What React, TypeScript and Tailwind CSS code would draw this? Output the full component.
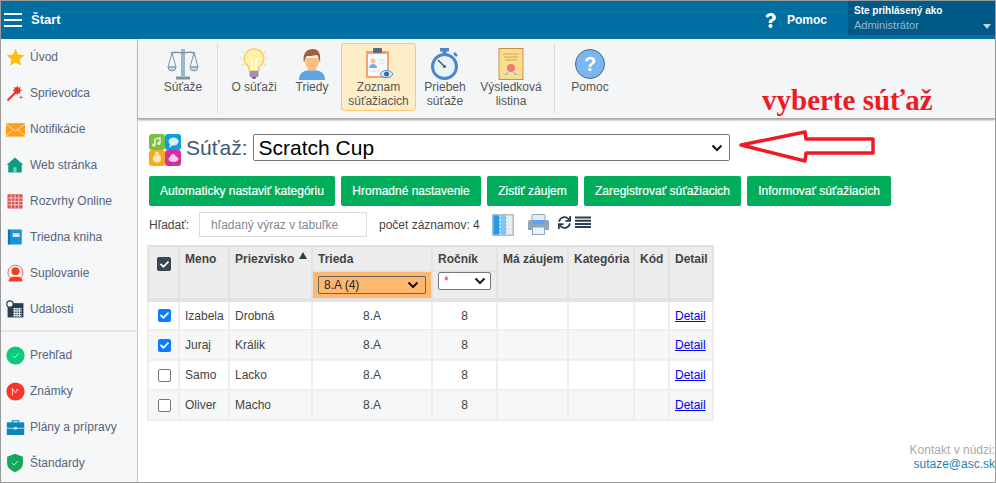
import React from "react";
import { FaCheck, FaQuestion, FaSync } from "react-icons/fa";

const I = ({ children, vb = "0 0 24 24", size = 18 }: { children: React.ReactNode; vb?: string; size?: number }) => (
  <svg viewBox={vb} width={size} height={size} className="shrink-0">{children}</svg>
);

const navTop: [string, React.ReactNode][] = [
  ["Úvod", <I size={19}><path d="M12 1l3.300 7.200 7.700.9-5.700 5.300 1.600 7.700L12 18.200 5.100 22.100l1.600-7.700L1 9.100l7.700-.9z" fill="#fdc00f" /></I>],
  ["Sprievodca", <I><path d="M1 21L13 9l2 2L3 23z" fill="#e8342c" /><path d="M15 2l1.500 3 3-1-1 3 3 1.500-3 1.500 1 3-3-1-1.500 3-1.500-3-3 1 1-3-3-1.500 3-1.500-1-3 3 1z" fill="#e8342c" /><path d="M20 15l.7 2 2 .7-2 .7-.7 2-.7-2-2-.7 2-.7z" fill="#e8342c" /></I>],
  ["Notifikácie", <I size={19}><rect x="0" y="4" width="24" height="17" fill="#fb9f1e" /><path d="M0 5l12 9 12-9M0 20l9-8M24 20l-9-8" fill="none" stroke="#fff1d8" strokeWidth="1" /></I>],
  ["Web stránka", <I><path d="M12 2L1 11.500 3 12v10h18V12l2-.5z" fill="#0a9d83" /><rect x="10" y="15" width="4" height="7" fill="#7fd0c0" /></I>],
  ["Rozvrhy Online", <I><rect x="2" y="3" width="20" height="19" fill="#d9534f" /><path d="M2 8h20M2 12.500h20M2 17h20M7 3v19M12 3v19M17 3v19" stroke="#f6d5d3" strokeWidth="1.200" /></I>],
  ["Triedna kniha", <I><rect x="4" y="2" width="17" height="20" rx="1" fill="#1b93d8" /><rect x="2.500" y="2" width="3" height="20" fill="#1071ad" /><rect x="9" y="7" width="9" height="5" fill="#d8eefb" /></I>],
  ["Suplovanie", <I size={19}><circle cx="12" cy="11" r="9.500" fill="none" stroke="#f0634e" strokeWidth="1.200" /><circle cx="12" cy="9" r="5" fill="#f73d1e" /><path d="M3 22c1-6 5-6 9-6s8 0 9 6z" fill="#f73d1e" /></I>],
  ["Udalosti", <I size={19}><rect x="2" y="4" width="20" height="18" fill="#2b3e50" /><path d="M9 11h11M9 14h11M9 17h11M9 20h11M11 10v11M14 10v11M17 10v11" stroke="#e9edf0" strokeWidth="1.300" /><circle cx="5" cy="5" r="4" fill="#f4f6f8" stroke="#2b3e50" strokeWidth="1.500" /></I>],
];
const navBottom: [string, React.ReactNode][] = [
  ["Prehľad", <I size={19}><circle cx="12" cy="12" r="11.500" fill="#0fc97a" /><path d="M8 12l3 3 5-6" fill="none" stroke="#d9fbe9" strokeWidth="1" /></I>],
  ["Známky", <I size={19}><circle cx="12" cy="12" r="11.500" fill="#f8352a" /><path d="M8 17V8l4 6 2-5 2 2" fill="none" stroke="#ffd8d4" strokeWidth="1.200" /></I>],
  ["Plány a prípravy", <I size={19}><path d="M8 6V3.500h8V6" fill="none" stroke="#0b86bd" strokeWidth="1.500" /><rect x="1" y="5.500" width="22" height="16" fill="#0b86bd" /><path d="M1 13h22" stroke="#d8eefb" strokeWidth="1" /><rect x="10" y="11.500" width="4" height="3" fill="#d8eefb" /></I>],
  ["Štandardy", <I size={20}><path d="M12 1l9.500 3.500V12c0 6-4.500 9-9.500 11-5-2-9.500-5-9.500-11V4.500z" fill="#12a95a" /><path d="M8.500 12l2.500 2.500 4.500-5" fill="none" stroke="#d9fbe9" strokeWidth="1" /></I>],
];

const NavItem = ({ label, icon }: { label: string; icon: React.ReactNode }) => (
  <div className="flex h-9 items-center">
    <div className="flex w-[29px] justify-center pl-[2px] pr-[3px]">{icon}</div>
    <span>{label}</span>
  </div>
);

const Tool = ({ label, icon, active, w }: { label: React.ReactNode; icon: React.ReactNode; active?: boolean; w: string }) => (
  <div className={`flex h-[68px] shrink-0 flex-col items-center rounded-[3px] border pt-[3px] text-center leading-[14px] text-[#555] ${w} ${active ? "border-[#fcc96b] bg-[#fdeec9]" : "border-transparent"}`}>
    <div className="flex h-[33px] items-center justify-center">{icon}</div>
    <div className="whitespace-nowrap">{label}</div>
  </div>
);

const btns: [string, string][] = [
  ["Automaticky nastaviť kategóriu", "w-[186px]"],
  ["Hromadné nastavenie", "w-[140px]"],
  ["Zistiť záujem", "w-[91px]"],
  ["Zaregistrovať súťažiacich", "w-[157px]"],
  ["Informovať súťažiacich", "w-[144px]"],
];

const rows = [
  ["Izabela", "Drobná", true],
  ["Juraj", "Králik", true],
  ["Samo", "Lacko", false],
  ["Oliver", "Macho", false],
] as const;

const Chevron = () => (
  <svg width="12" height="8" viewBox="0 0 12 8" className="shrink-0"><path d="M1.500 1.500L6 6l4.500-4.500" fill="none" stroke="#111" strokeWidth="2" /></svg>
);

const th = "border-2 border-[#e3e3e3] bg-[#ececec] align-top text-left font-bold text-[#444] whitespace-nowrap";
const td = "border-2 border-[#eeeeee] px-[5px] text-[#444]";

export default function App() {
  return (
    <div className="relative flex h-[483px] w-[996px] flex-col overflow-hidden border border-[#9a9a9a] bg-white text-[12px] [font-family:Liberation_Sans,Arial,sans-serif]">
      <header className="flex h-[38px] shrink-0 items-center bg-[#0070a3] text-white">
        <div className="ml-[3px] flex w-[18px] flex-col gap-[4px]">
          <div className="h-[2px] bg-white" /><div className="h-[2px] bg-white" /><div className="h-[2px] bg-white" />
        </div>
        <span className="ml-[9px] text-[13px] font-bold">Štart</span>
        <div className="ml-auto flex items-center font-bold">
          <FaQuestion size={15} className="mr-[9px]" />
          <span>Pomoc</span>
        </div>
        <div className="ml-[21px] h-[34px] w-[147px] self-start rounded-bl-[2px] bg-[#005a87] pl-[6px] pt-[3px] leading-[14px]">
          <div className="text-[10px] font-bold">Ste prihlásený ako</div>
          <div className="relative text-[11px] text-[#8fbad4]">Administrátor
            <span className="absolute right-[4px] top-[6px] h-0 w-0 border-x-[4px] border-t-[5px] border-x-transparent border-t-[#b9d3e3]" />
          </div>
        </div>
      </header>
      <div className="flex min-h-0 flex-1">
        <aside className="w-[137px] shrink-0 border-r border-[#c9c9c9] bg-[#f5f7f9] text-[#58647a]">
          <div className="border-b-2 border-[#e2e4e6] pb-[3px]">
            {navTop.map(([l, i]) => <NavItem key={l} label={l} icon={i} />)}
          </div>
          <div className="pt-[5px]">
            {navBottom.map(([l, i]) => <NavItem key={l} label={l} icon={i} />)}
          </div>
        </aside>
        <main className="min-w-0 flex-1">
          <div className="flex h-[80px] items-start border-b border-[#aaa] bg-[#f4f5f7] pl-[16px] pt-[4px] shadow-[0_1px_2px_#999]">
            <Tool w="w-[58px]" label="Súťaže" icon={
              <svg width="32" height="32" viewBox="0 0 32 32"><path d="M16 1v27" stroke="#9db6c6" strokeWidth="4" /><path d="M9 30h14" stroke="#7d94a3" strokeWidth="3" /><path d="M4 5c6-2 9 0 12 0s6-2 12 0" stroke="#7d94a3" strokeWidth="1.500" fill="none" /><path d="M5 5L1 19h8zM27 5l-4 14h8z" fill="none" stroke="#7d94a3" /><path d="M1 19a4 4 0 008 0zM23 19a4 4 0 008 0z" fill="#b7d8ec" stroke="#7d94a3" /></svg>
            } />
            <div className="mx-[5px] h-[70px] w-[1px] shrink-0 bg-[#dcdcdc]" />
            <Tool w="w-[62px]" label="O súťaži" icon={
              <svg width="30" height="32" viewBox="0 0 30 32"><path d="M15 1a9.500 9.500 0 00-6 17c1 1 1 3 1.500 5h9c.5-2 .5-4 1.500-5a9.500 9.500 0 00-6-17z" fill="#fff2a6" stroke="#f2cd6b" strokeWidth="1.500" /><path d="M13 22v-9l-2-3M17 22v-9l2-3" stroke="#fff" strokeWidth="1.500" fill="none" /><rect x="10.500" y="23" width="9" height="6" rx="1" fill="#a58cbf" /><path d="M12.500 29h5L16 31h-2z" fill="#6f5a8a" /><path d="M1 10h2M27 10h2M3 3l2 2M27 3l-2 2M3 17l2-1M27 17l-2-1" stroke="#f2d48a" /></svg>
            } />
            <div className="w-[6px] shrink-0" />
            <Tool w="w-[42px]" label="Triedy" icon={
              <svg width="30" height="32" viewBox="0 0 30 32"><path d="M2 32c0-8 6-10 13-10s13 2 13 10z" fill="#5ea6dd" /><path d="M8 10c0 7 3 13 7 13s7-6 7-13z" fill="#f9bf7e" /><path d="M7 15C5 5 10 1 16 1c6 0 8 5 7 14-1-3-1-6-3-8-4 1-8 1-10 1-2 1-2 4-3 7z" fill="#a2603a" /></svg>
            } />
            <div className="w-[8px] shrink-0" />
            <Tool active w="w-[75px]" label={<>Zoznam<br />súťažiacich</>} icon={
              <svg width="30" height="32" viewBox="0 0 30 32"><rect x="2" y="3" width="23" height="27" fill="#f3a566" /><rect x="4" y="6" width="19" height="22" fill="#fbfbfb" /><rect x="9" y="0" width="9" height="5" rx="1" fill="#5a6b7d" /><circle cx="9" cy="13" r="2.500" fill="#f3c093" /><path d="M5 20c0-3 2-4 4-4s4 1 4 4z" fill="#76aedd" /><path d="M15 12h6M15 15h6M6 23h10" stroke="#d8d8d8" /><path d="M16 26c3-5 10-5 13 0-3 5-10 5-13 0z" fill="#d6e8f5" stroke="#4d90c4" /><circle cx="22.500" cy="26" r="2.500" fill="#2e6fa6" /></svg>
            } />
            <div className="w-[2px] shrink-0" />
            <Tool w="w-[54px]" label={<>Priebeh<br />súťaže</>} icon={
              <svg width="30" height="32" viewBox="0 0 30 32"><rect x="10" y="0" width="9" height="3.500" fill="#4a89c6" /><rect x="12.500" y="3" width="4" height="3" fill="#4a89c6" /><path d="M24 5l3 3" stroke="#4a89c6" strokeWidth="2.500" /><circle cx="14.500" cy="18.500" r="12" fill="#e9f1f8" stroke="#4a89c6" strokeWidth="3" /><path d="M8 12l6.500 6.500" stroke="#4a5a68" strokeWidth="1.500" /><circle cx="14.500" cy="18.500" r="1.500" fill="#4a5a68" /></svg>
            } />
            <div className="w-[4px] shrink-0" />
            <Tool w="w-[70px]" label={<>Výsledková<br />listina</>} icon={
              <svg width="26" height="32" viewBox="0 0 26 32"><rect x="1" y="0.500" width="24" height="31" fill="#fbdd8e" stroke="#c98f48" strokeWidth="1" /><path d="M5 6h16M6 9h14M7 12h12" stroke="#e2b765" strokeWidth="1.300" /><path d="M9 25l-4 2h4l3-4zM17 25l4 2h-4l-3-4z" fill="#8cc0ea" /><circle cx="13" cy="20" r="4" fill="#ef7a7a" /></svg>
            } />
            <div className="ml-[8px] mr-[5px] h-[70px] w-[1px] shrink-0 bg-[#dcdcdc]" />
            <Tool w="w-[60px]" label="Pomoc" icon={
              <svg width="32" height="32" viewBox="0 0 32 32"><circle cx="16" cy="16" r="14.500" fill="#7ab6ef" stroke="#51667a" strokeWidth="1" /><text x="16" y="23" textAnchor="middle" fontSize="20" fontWeight="700" fill="#fff" fontFamily="Liberation Sans">?</text></svg>
            } />
          </div>

          <div className="pl-[11px] pt-[15px]">
            <div className="flex h-[32px] items-start">
              <svg width="32" height="32" viewBox="0 0 32 32" className="shrink-0">
                <rect x="0" y="0" width="16" height="16" rx="3" fill="#7ac143" /><rect x="16" y="0" width="16" height="16" rx="3" fill="#0f9ddb" />
                <rect x="0" y="16" width="16" height="16" rx="3" fill="#f9a81b" /><rect x="16" y="16" width="16" height="16" rx="3" fill="#d52f9b" />
                <path d="M6 11V5l5-1v5" stroke="#e6f5d6" strokeWidth="1.500" fill="none" /><circle cx="4.800" cy="11" r="1.700" fill="#e6f5d6" /><circle cx="9.800" cy="9.500" r="1.700" fill="#e6f5d6" />
                <ellipse cx="24.500" cy="7.500" rx="5" ry="4" fill="#d7f0fb" /><path d="M21 10l-1 4 4-3z" fill="#d7f0fb" />
                <circle cx="8" cy="24.500" r="4" fill="#ffe8b8" /><circle cx="8" cy="19.500" r="2" fill="#ffe8b8" />
                <ellipse cx="24.500" cy="25" rx="5" ry="3" fill="#f7cdea" /><circle cx="24" cy="22.500" r="2.500" fill="#f7cdea" />
              </svg>
              <span className="ml-[5px] text-[21px] leading-[27px] text-[#3c5a74]">Súťaž:</span>
              <div className="ml-[5px] flex h-[27px] w-[477px] items-center justify-between rounded-[2px] border border-[#767676] bg-white pl-[5px] pr-[6px] text-[21px] text-black">
                <span>Scratch Cup</span><Chevron />
              </div>
            </div>

            <div className="mt-[10px] flex gap-[6px]">
              {btns.map(([b, w]) => (
                <div key={b} className={`flex h-[30px] items-center justify-center rounded-[2px] bg-[#00ad5b] text-white ${w} [-webkit-text-stroke:0.2px_white]`}>
                  {b}
                </div>
              ))}
            </div>

            <div className="mt-[6px] flex h-[25px] items-center text-[#444]">
              <span className="w-[50px]">Hľadať:</span>
              <div className="flex h-[25px] w-[168px] items-center border border-[#dcdcdc] pl-[11px] text-[#7f8a94]">hľadaný výraz v tabuľke</div>
              <span className="ml-[12px]">počet záznamov: 4</span>
              <svg width="22" height="22" viewBox="0 0 22 22" className="ml-[12px]"><rect width="22" height="22" fill="#aebecb" /><rect x="1.500" y="1.500" width="6" height="19" fill="#1f9bf0" /><rect x="8.500" y="1.500" width="5.500" height="19" fill="#7cc7f7" /><rect x="15" y="1.500" width="5.500" height="19" fill="#e6edf3" /><path d="M8 1.500v19M14.500 1.500v19" stroke="#fff" strokeWidth="1" strokeDasharray="2 1.500" /></svg>
              <svg width="21" height="21" viewBox="0 0 21 21" className="ml-[14px]"><rect x="4" y="0.500" width="13" height="8" rx="1" fill="#e4ebf1" stroke="#8ea5ba" /><path d="M2 6h17a2 2 0 012 2v8h-4v-3H4v3H0V8a2 2 0 012-2z" fill="#8ea5ba" /><rect x="5" y="6" width="11" height="4" fill="#5aa5ec" /><rect x="4.500" y="13" width="12" height="7.500" fill="#eef2f5" stroke="#8ea5ba" /></svg>
              <FaSync size={13} color="#2b3e50" className="ml-[9px] -translate-y-[2px]" />
              <svg width="16" height="13" viewBox="0 0 16 13" className="ml-[4px] -translate-y-[2px]"><path d="M0 1.500h16M0 4.700h16M0 7.900h16M0 11.100h16" stroke="#2b3e50" strokeWidth="2" /></svg>
            </div>

            <table className="-ml-[2px] mt-[8px] w-[565px] table-fixed border-collapse">
              <colgroup>
                <col className="w-[31px]" /><col className="w-[50px]" /><col className="w-[83px]" /><col className="w-[120px]" />
                <col className="w-[65px]" /><col className="w-[71px]" /><col className="w-[66px]" /><col className="w-[35px]" /><col className="w-[44px]" />
              </colgroup>
              <thead>
                <tr className="h-[25px]">
                  <th rowSpan={2} className={`${th} border-b-4 pt-[10px]`}>
                    <div className="ml-[8px] flex h-[14px] w-[14px] items-center justify-center rounded-[2px] bg-[#3a4653]"><FaCheck size={9} color="#fff" /></div>
                  </th>
                  <th rowSpan={2} className={`${th} border-b-4 px-[5px] pt-[3px]`}>Meno</th>
                  <th rowSpan={2} className={`${th} relative border-b-4 px-[5px] pt-[3px]`}>Priezvisko
                    <span className="absolute right-[4px] top-[5px] h-0 w-0 border-x-[4px] border-b-[7px] border-x-transparent border-b-[#2b3e50]" />
                  </th>
                  <th className={`${th} px-[5px] pt-[3px]`}>Trieda</th>
                  <th className={`${th} px-[5px] pt-[3px]`}>Ročník</th>
                  <th rowSpan={2} className={`${th} border-b-4 px-[5px] pt-[3px]`}>Má záujem</th>
                  <th rowSpan={2} className={`${th} border-b-4 px-[5px] pt-[3px]`}>Kategória</th>
                  <th rowSpan={2} className={`${th} border-b-4 px-[5px] pt-[3px]`}>Kód</th>
                  <th rowSpan={2} className={`${th} border-b-4 px-[5px] pt-[3px]`}>Detail</th>
                </tr>
                <tr className="h-[29px]">
                  <th className="border-2 border-b-4 border-[#e3e3e3] bg-[#ffb870] px-[5px] font-normal">
                    <div className="flex h-[18px] items-center justify-between rounded-[1px] border border-[#666] pl-[5px] pr-[6px] text-[#222]">8.A (4)<Chevron /></div>
                  </th>
                  <th className={`${th} border-b-4 px-[5px] align-middle`}>
                    <div className="flex h-[18px] items-center justify-between rounded-[2px] border border-[#767676] bg-white pl-[5px] pr-[4px] font-normal text-[#c33]">*<Chevron /></div>
                  </th>
                </tr>
              </thead>
              <tbody>
                {rows.map(([a, b, c], i) => (
                  <tr key={a} className={`h-[30px] ${i % 2 ? "bg-[#f7f7f7]" : "bg-white"}`}>
                    <td className={td}>
                      {c ? (
                        <div className="ml-[4px] flex h-[13px] w-[13px] items-center justify-center rounded-[2px] bg-[#0a7cff]"><FaCheck size={9} color="#fff" /></div>
                      ) : (
                        <div className="ml-[4px] h-[13px] w-[13px] rounded-[2px] border border-[#767676] bg-white" />
                      )}
                    </td>
                    <td className={td}>{a}</td>
                    <td className={td}>{b}</td>
                    <td className={`${td} text-center`}>8.A</td>
                    <td className={`${td} text-center`}>8</td>
                    <td className={td} /><td className={td} /><td className={td} />
                    <td className={td}><span className="text-[#0000ee] underline">Detail</span></td>
                  </tr>
                ))}
              </tbody>
            </table>
          </div>
        </main>
      </div>

      <div className="absolute right-0 top-[442px] text-right leading-[14px]">
        <div className="text-[#a9a9a9]">Kontakt v núdzi:</div>
        <div className="text-[#1f7fb0]">sutaze@asc.sk</div>
      </div>
      <div className="absolute left-[761px] top-[81px] text-[29px] font-bold leading-[36px] text-[#ed1c24] font-[family-name:Liberation_Serif]">vyberte súťaž</div>
      <svg className="absolute left-[735px] top-[127px]" width="142" height="38" viewBox="0 0 142 38">
        <path d="M5 17L69 4l1 7h67v14H70l-1 8z" fill="none" stroke="#ed1c24" strokeWidth="3.500" strokeLinejoin="round" />
      </svg>
    </div>
  );
}
